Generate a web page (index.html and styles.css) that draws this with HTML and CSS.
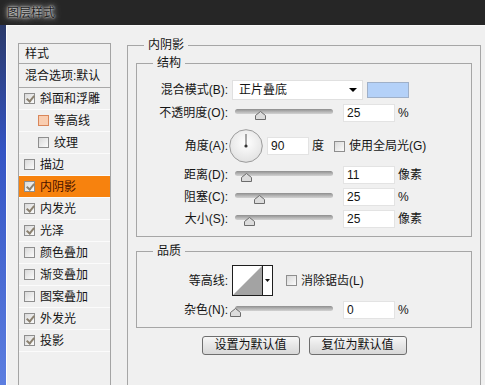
FILE: index.html
```html
<!DOCTYPE html>
<html lang="zh">

<head>
    <meta charset="UTF-8">
    <title>图层样式</title>
    <link rel="stylesheet" href="styles.css">
</head>

<body>
    <div class="titlebar"><span class="title">图层样式</span></div>

    <div class="window">
        <div class="desk"></div>

        <div class="dialog">
            <!-- style list on the left -->
            <ul class="styles-list">
                <li class="head">样式</li>
                <li class="head blend">混合选项:默认</li>
                <li><span class="cb on"></span>斜面和浮雕</li>
                <li class="sub"><span class="cb peach"></span>等高线</li>
                <li class="sub"><span class="cb"></span>纹理</li>
                <li><span class="cb"></span>描边</li>
                <li class="active"><span class="cb on"></span>内阴影</li>
                <li><span class="cb on"></span>内发光</li>
                <li><span class="cb on"></span>光泽</li>
                <li><span class="cb"></span>颜色叠加</li>
                <li><span class="cb"></span>渐变叠加</li>
                <li><span class="cb"></span>图案叠加</li>
                <li><span class="cb on"></span>外发光</li>
                <li><span class="cb on"></span>投影</li>
            </ul>

            <div class="main">
                <fieldset class="group outer">
                    <legend>内阴影</legend>
                    <div class="outer-body">

                        <fieldset class="group">
                            <legend>结构</legend>
                            <div class="struct-body">
                                <div class="row r-blend">
                                    <span class="lbl">混合模式(B):</span>
                                    <div class="select">正片叠底<span class="arrow"></span></div>
                                    <span class="swatch"></span>
                                </div>

                                <div class="row r-slider r-opacity">
                                    <span class="lbl">不透明度(O):</span>
                                    <div class="slider">
                                        <div class="track">
                                            <svg class="thumb" style="left: 26.5%" width="11" height="9" viewBox="0 0 11 9">
                                                <polygon points="5.5,0.5 10.5,4.5 10.5,8.5 0.5,8.5 0.5,4.5" fill="#dcdcdc" stroke="#6c6c6c" />
                                            </svg>
                                        </div>
                                    </div>
                                    <span class="field">25</span>
                                    <span class="unit">%</span>
                                </div>

                                <div class="row r-angle">
                                    <span class="lbl">角度(A):</span>
                                    <svg class="dial" width="34" height="34" viewBox="0 0 34 34">
                                        <defs>
                                            <radialGradient id="dialFill" cx="50%" cy="40%" r="60%">
                                                <stop offset="0" stop-color="#ffffff" />
                                                <stop offset="1" stop-color="#e2e2e2" />
                                            </radialGradient>
                                        </defs>
                                        <circle cx="17" cy="17" r="16.3" fill="url(#dialFill)" stroke="#9a9a9a" />
                                        <line x1="17" y1="17" x2="17" y2="5" stroke="#555" stroke-width="1" />
                                        <circle cx="17" cy="17" r="1.6" fill="#333" />
                                    </svg>
                                    <span class="field short">90</span>
                                    <span class="unit">度</span>
                                    <span class="cb gap"></span>
                                    <span class="cb-text">使用全局光(G)</span>
                                </div>

                                <div class="row r-slider">
                                    <span class="lbl">距离(D):</span>
                                    <div class="slider">
                                        <div class="track">
                                            <svg class="thumb" style="left: 12.2%" width="11" height="9" viewBox="0 0 11 9">
                                                <polygon points="5.5,0.5 10.5,4.5 10.5,8.5 0.5,8.5 0.5,4.5" fill="#dcdcdc" stroke="#6c6c6c" />
                                            </svg>
                                        </div>
                                    </div>
                                    <span class="field">11</span>
                                    <span class="unit">像素</span>
                                </div>

                                <div class="row r-slider">
                                    <span class="lbl">阻塞(C):</span>
                                    <div class="slider">
                                        <div class="track">
                                            <svg class="thumb" style="left: 25.5%" width="11" height="9" viewBox="0 0 11 9">
                                                <polygon points="5.5,0.5 10.5,4.5 10.5,8.5 0.5,8.5 0.5,4.5" fill="#dcdcdc" stroke="#6c6c6c" />
                                            </svg>
                                        </div>
                                    </div>
                                    <span class="field">25</span>
                                    <span class="unit">%</span>
                                </div>

                                <div class="row r-slider">
                                    <span class="lbl">大小(S):</span>
                                    <div class="slider">
                                        <div class="track">
                                            <svg class="thumb" style="left: 14.3%" width="11" height="9" viewBox="0 0 11 9">
                                                <polygon points="5.5,0.5 10.5,4.5 10.5,8.5 0.5,8.5 0.5,4.5" fill="#dcdcdc" stroke="#6c6c6c" />
                                            </svg>
                                        </div>
                                    </div>
                                    <span class="field">25</span>
                                    <span class="unit">像素</span>
                                </div>
                            </div>
                        </fieldset>

                        <fieldset class="group quality">
                            <legend>品质</legend>
                            <div class="quality-body">
                                <div class="row r-contour">
                                    <span class="lbl">等高线:</span>
                                    <svg class="contour" width="41" height="31" viewBox="0 0 41 31">
                                        <rect x="0.5" y="0.5" width="40" height="30" fill="#fff" stroke="#1e1e1e" />
                                        <polygon points="1,30 30,1 30,30" fill="#a3a3a3" />
                                        <line x1="30.5" y1="0" x2="30.5" y2="31" stroke="#1e1e1e" />
                                        <polygon points="33,14 38,14 35.5,17" fill="#111" />
                                    </svg>
                                    <span class="cb gap2"></span>
                                    <span class="cb-text">消除锯齿(L)</span>
                                </div>

                                <div class="row r-slider r-noise">
                                    <span class="lbl">杂色(N):</span>
                                    <div class="slider">
                                        <div class="track">
                                            <svg class="thumb" style="left: 0%" width="11" height="9" viewBox="0 0 11 9">
                                                <polygon points="5.5,0.5 10.5,4.5 10.5,8.5 0.5,8.5 0.5,4.5" fill="#dcdcdc" stroke="#6c6c6c" />
                                            </svg>
                                        </div>
                                    </div>
                                    <span class="field">0</span>
                                    <span class="unit">%</span>
                                </div>
                            </div>
                        </fieldset>

                        <div class="buttons">
                            <button class="btn">设置为默认值</button>
                            <button class="btn">复位为默认值</button>
                        </div>
                    </div>
                </fieldset>
            </div>
        </div>
    </div>
</body>

</html>
```

FILE: styles.css
```css
body {
    margin: 0;
    width: 485px;
    height: 385px;
    overflow: hidden;
    background-color: #262626;
    font-family: "Liberation Sans", "Noto Sans CJK SC", sans-serif;
    font-size: 12px;
    line-height: 16px;
    color: #151515;
}

/* title bar */
.titlebar {
    height: 25px;
    display: flex;
    align-items: center;
    padding-left: 7px;
}

.title {
    color: #1c1c1c;
    text-shadow: 0 0 2px #fff, 0 0 5px #d8d8d8, 0 0 9px #9a9a9a;
}

.window {
    display: flex;
    height: 360px;
}

.desk {
    width: 6px;
    background: linear-gradient(to bottom, #2b3a6a, #3454c4 35%, #5c7ee0);
}

.dialog {
    flex: 1;
    display: flex;
    align-items: flex-start;
    box-sizing: border-box;
    height: 360px;
    background-color: #f0f0f0;
    border-top: 1px solid #f8f8f8;
    border-left: 1px solid #ffffff;
    padding: 11px 0 0 11px;
}

/* style list on the left, cut off by the window bottom */
.styles-list {
    list-style: none;
    margin: 6px 0 0;
    padding: 0;
    width: 93px;
    height: 342px;
    box-sizing: border-box;
    border: 1px solid #a4a4a4;
    border-bottom: none;
    background-color: #f0f0f0;
}

.styles-list li {
    display: flex;
    align-items: center;
    height: 22px;
    box-sizing: border-box;
    padding-left: 5px;
    border-bottom: 1px solid #fbfbfb;
}

.styles-list li.head {
    height: 20px;
    padding-left: 6px;
    border-bottom: 1px solid #a8a8a8;
}

.styles-list li.blend {
    height: 24px;
}

.styles-list li.sub {
    padding-left: 19px;
}

.styles-list li.active {
    background-color: #f7820e;
    color: #4a1200;
}

.styles-list .cb {
    margin-right: 5px;
}

/* checkbox */
.cb {
    position: relative;
    display: inline-block;
    width: 11px;
    height: 11px;
    box-sizing: border-box;
    border: 1px solid #8e8e8e;
    background: linear-gradient(to bottom right, #d9d9d9, #fbfbfb);
    flex-shrink: 0;
}

.cb.on::after {
    content: "";
    position: absolute;
    left: 3px;
    top: 0px;
    width: 3px;
    height: 6px;
    border-right: 2px solid #8b8170;
    border-bottom: 2px solid #8b8170;
    transform: rotate(40deg);
}

.cb.peach {
    border-color: #d9865a;
    background: #f9cdb0;
}

/* main area */
.main {
    width: 354px;
    margin-left: 16px;
}

.group {
    margin: 0;
    padding: 0;
    min-width: 0;
    border: 1px solid #a6a6a6;
}

.group legend {
    margin-left: 16px;
    padding: 0 4px;
    line-height: 16px;
}

.outer {
    height: 348px;
    box-sizing: border-box;
    border-bottom: none;
}

.outer-body {
    padding: 2px 8px 0;
}

.struct-body {
    padding: 9px 0 6px;
}

.row {
    display: flex;
    align-items: center;
}

.lbl {
    width: 91px;
    flex-shrink: 0;
    text-align: right;
}

.r-blend {
    height: 20px;
    margin-bottom: 2px;
}

.r-slider {
    height: 22px;
}

.r-opacity {
    margin-bottom: 4px;
}

.r-angle {
    height: 36px;
}

.select {
    width: 131px;
    height: 20px;
    margin-left: 4px;
    box-sizing: border-box;
    display: flex;
    align-items: center;
    justify-content: space-between;
    padding: 0 5px 0 6px;
    background-color: #fff;
    border: 1px solid #e0e0e0;
}

.arrow {
    width: 0;
    height: 0;
    border-left: 4px solid transparent;
    border-right: 4px solid transparent;
    border-top: 4px solid #000;
}

.swatch {
    width: 42px;
    height: 16px;
    margin-left: 4px;
    box-sizing: border-box;
    background-color: #b4d1f8;
    border: 1px solid #9fb0c8;
}

/* sliders */
.slider {
    width: 104px;
    height: 14px;
    margin-left: 4px;
    padding: 3px 3px 0;
    box-sizing: border-box;
    flex-shrink: 0;
}

.track {
    position: relative;
    height: 5px;
    border-radius: 3px;
    background: linear-gradient(to bottom, #8e8e8e, #b9b9b9 60%, #d2d2d2);
}

.thumb {
    position: absolute;
    top: 2px;
    margin-left: -5.5px;
}

.field {
    width: 52px;
    height: 18px;
    margin-left: 7px;
    box-sizing: border-box;
    padding-left: 3px;
    line-height: 16px;
    background-color: #fff;
    border: 1px solid #e3e3e3;
}

.field.short {
    width: 42px;
    margin-left: 4px;
}

.unit {
    margin-left: 3px;
}

.dial {
    margin-left: 1px;
    flex-shrink: 0;
}

.cb.gap {
    margin-left: 10px;
}

.cb.gap2 {
    margin-left: 13px;
}

.cb-text {
    margin-left: 4px;
}

/* quality */
.quality {
    margin-top: 6px;
}

.quality-body {
    padding: 6px 0 7px;
}

.r-contour {
    height: 31px;
}

.contour {
    margin-left: 4px;
    flex-shrink: 0;
}

.r-noise {
    height: 20px;
    margin-top: 4px;
}

.buttons {
    display: flex;
    justify-content: center;
    gap: 9px;
    margin-top: 8px;
}

.btn {
    width: 98px;
    height: 19px;
    padding: 0;
    font-family: inherit;
    font-size: 12px;
    line-height: 17px;
    color: #111;
    border: 1px solid #6e6e6e;
    border-radius: 3px;
    background: linear-gradient(to bottom, #f7f7f7, #e6e6e6 50%, #d8d8d8);
}
```
